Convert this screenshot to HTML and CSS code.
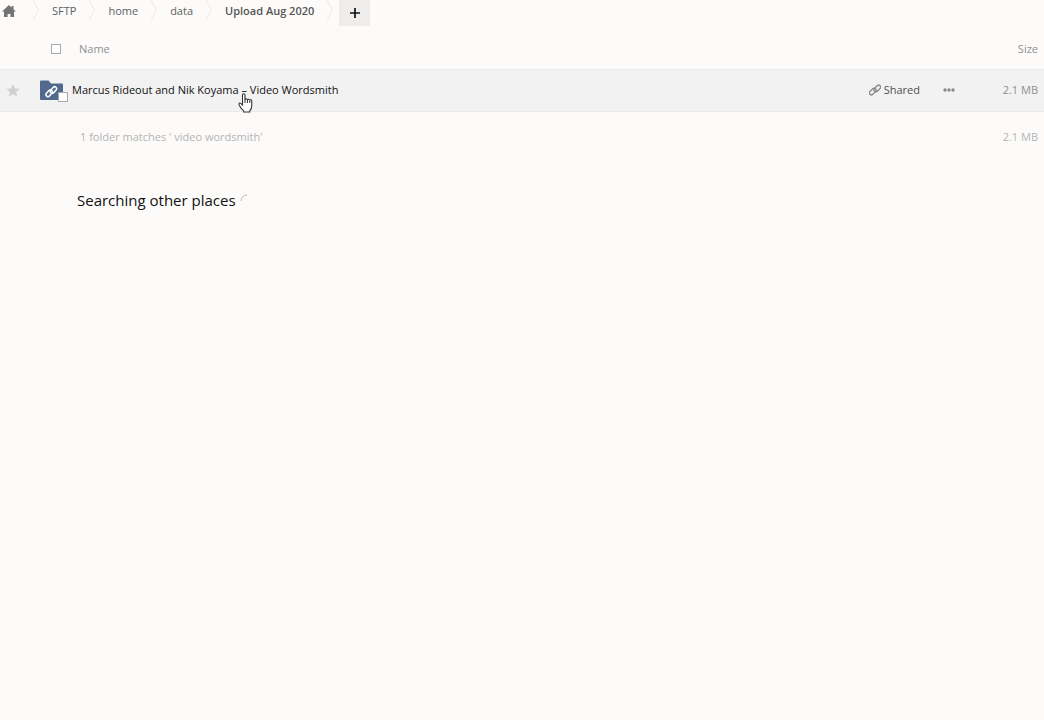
FILE: index.html
```html
<!DOCTYPE html>
<html lang="en">
<head>
<meta charset="utf-8">
<title>Files</title>
<link rel="stylesheet" href="styles.css">
</head>
<body>
<nav class="crumbs" aria-label="Breadcrumb">
  <a class="crumb-home" href="#" aria-label="Home"><svg width="14" height="12" viewBox="0 0 14 12"><path d="M7 0 0 6.500h2V12h3.600V9h2.800v3H12V6.500h2L11.500 4.200V1H9.500v1.400z" fill="#747474"/></svg></a>
  <svg class="sep" width="8" height="20" viewBox="0 0 8 20"><path d="M1 0 6.500 10.500 1 20"/></svg>
  <a class="crumb" href="#">SFTP</a>
  <svg class="sep" width="8" height="20" viewBox="0 0 8 20"><path d="M1 0 6.500 10.500 1 20"/></svg>
  <a class="crumb" href="#">home</a>
  <svg class="sep" width="8" height="20" viewBox="0 0 8 20"><path d="M1 0 6.500 10.500 1 20"/></svg>
  <a class="crumb" href="#">data</a>
  <svg class="sep" width="8" height="20" viewBox="0 0 8 20"><path d="M1 0 6.500 10.500 1 20"/></svg>
  <a class="crumb current" href="#">Upload Aug 2020</a>
  <svg class="sep" width="8" height="20" viewBox="0 0 8 20"><path d="M1 0 6.500 10.500 1 20"/></svg>
  <button class="add" type="button" aria-label="New"><svg width="12" height="12" viewBox="0 0 12 12"><path d="M6 1v10M1 6h10" stroke="#111" stroke-width="1.700"/></svg></button>
</nav>
<table class="files">
  <thead>
    <tr>
      <th class="col-star"></th>
      <th class="col-name"><div class="head-name"><input class="box" id="all" type="checkbox"><label for="all">Name</label></div></th>
      <th class="col-size">Size</th>
    </tr>
  </thead>
  <tbody>
    <tr class="file">
      <td class="col-star"><button class="icon-button" type="button" aria-label="Favorite"><svg width="14" height="13" viewBox="0 0 14 13"><path d="m7 0 1.900 4.400 4.800.4-3.600 3.200 1.100 4.800L7 10.200l-4.200 2.600 1.100-4.800L.3 4.800l4.800-.4z" fill="#d0d0d0"/></svg></button></td>
      <td>
        <div class="file-name">
          <span class="thumb">
            <svg width="24" height="21" viewBox="0 0 24 21"><path d="M0 1.500Q0 .5 1 .5h7.500L11 3.500h11q1 0 1 1V19q0 1-1 1H1q-1 0-1-1z" fill="#50698c"/><g transform="translate(11.300 11.700) rotate(-48)" fill="none" stroke="#fff" stroke-width="1.500"><rect x="-6.400" y="-2.500" width="7.600" height="4" rx="2"/><rect x="-1.200" y="-1.500" width="7.600" height="4" rx="2"/></g></svg>
            <input class="box pick" type="checkbox" aria-label="Select folder">
          </span>
          <a class="title" href="#">Marcus Rideout and Nik Koyama – Video Wordsmith<svg class="pointer" width="15" height="20" viewBox="0 0 15 20"><path d="M4.500 12.500V2.300q0-1.500 1.200-1.500t1.300 1.500v4.500q.2-1 1.200-1t1.200 1.200q.2-.8 1.200-.8t1.200 1.200q.1-.7.900-.7 1.100 0 1.100 1.500v4.200q0 3-2 5.500v1.100H5.700v-1.100Q3.200 16 1.300 12.200.5 10.400 1.700 10t2.800 2.500" fill="#fff" stroke="#333" stroke-width="1.100"/><path d="M7 6.500V10M9.400 7v3M11.800 7.500V10" stroke="#333"/></svg></a>
          <button class="share" type="button"><svg width="12" height="12" viewBox="0 0 12 12"><g transform="translate(6 6) rotate(-45)" fill="none" stroke="#888" stroke-width="1.300"><rect x="-6.600" y="-2.500" width="7.800" height="4" rx="2"/><rect x="-1.200" y="-1.500" width="7.800" height="4" rx="2"/></g></svg>Shared</button>
          <button class="icon-button" type="button" aria-label="More actions"><svg width="12" height="4" viewBox="0 0 12 4" fill="#888"><circle cx="2" cy="2" r="1.700"/><circle cx="6" cy="2" r="1.700"/><circle cx="10" cy="2" r="1.700"/></svg></button>
        </div>
      </td>
      <td class="col-size">2.1 MB</td>
    </tr>
  </tbody>
  <tfoot>
    <tr>
      <td></td>
      <td class="summary">1 folder matches ' video wordsmith'</td>
      <td class="col-size">2.1 MB</td>
    </tr>
  </tfoot>
</table>
<div class="searching" role="status">Searching other places<svg width="14" height="14" viewBox="0 0 14 14"><path d="M1 8a6 6 0 0 1 6-6" fill="none" stroke="#bbb"/></svg></div>
</body>
</html>
```
FILE: styles.css
```css
* { box-sizing: border-box; }
body {
  margin: 0;
  background: #fcfbfa;
  color: #222;
  font: 11px/20px "Open Sans", sans-serif;
}
a { color: inherit; text-decoration: none; }
svg { display: block; flex: none; }
button {
  margin: 0;
  padding: 0;
  border: 0;
  background: none;
  color: inherit;
  font: inherit;
}
.crumbs { display: flex; height: 26px; align-items: flex-start; color: #606060; }
.crumb-home { padding: 5px 16px 0 2px; }
.sep { fill: none; stroke: #ebebeb; }
.crumb { padding: 1px 12px 0; }
.current { color: #555; font-weight: 600; }
.add {
  display: flex;
  width: 31px;
  height: 26px;
  margin-left: 5px;
  align-items: center;
  justify-content: center;
  background: #eeedec;
}
.files { width: 100%; border-collapse: collapse; table-layout: fixed; }
th, td { padding: 0; text-align: left; font-weight: 400; }
thead tr { height: 43px; color: #909090; }
thead th { padding-top: 3px; }
.icon-button { display: block; }
.col-star { width: 40px; }
.col-star .icon-button { padding-left: 6px; }
.col-size { width: 80px; padding-right: 6px; text-align: right; color: #909090; }
.head-name { display: flex; align-items: center; gap: 18px; padding-left: 11px; }
.box {
  appearance: none;
  width: 10px;
  height: 10px;
  margin: 0;
  border: 1px solid #aaa;
  background: #fff;
}
.file { height: 42px; background: #f3f2f2; border: solid #ebeae9; border-width: 1px 0; }
.file-name { display: flex; align-items: center; }
.thumb { position: relative; margin-right: 8px; }
.pick { position: absolute; right: -4px; bottom: -1px; }
.title { position: relative; margin-right: auto; color: #111; }
.pointer { position: absolute; left: 166px; top: 13px; }
.share { display: flex; align-items: center; gap: 3px; margin-right: 23px; color: #505050; }
.file .file-name > .icon-button { margin-right: 9px; }
tfoot tr { height: 51px; }
tfoot td, tfoot .col-size { color: #b4b4b4; }
.summary { padding-left: 40px; }
.searching {
  display: flex;
  align-items: center;
  gap: 4px;
  padding: 27px 0 0 77px;
  color: #111;
  font-size: 15px;
  line-height: 22px;
}
```
